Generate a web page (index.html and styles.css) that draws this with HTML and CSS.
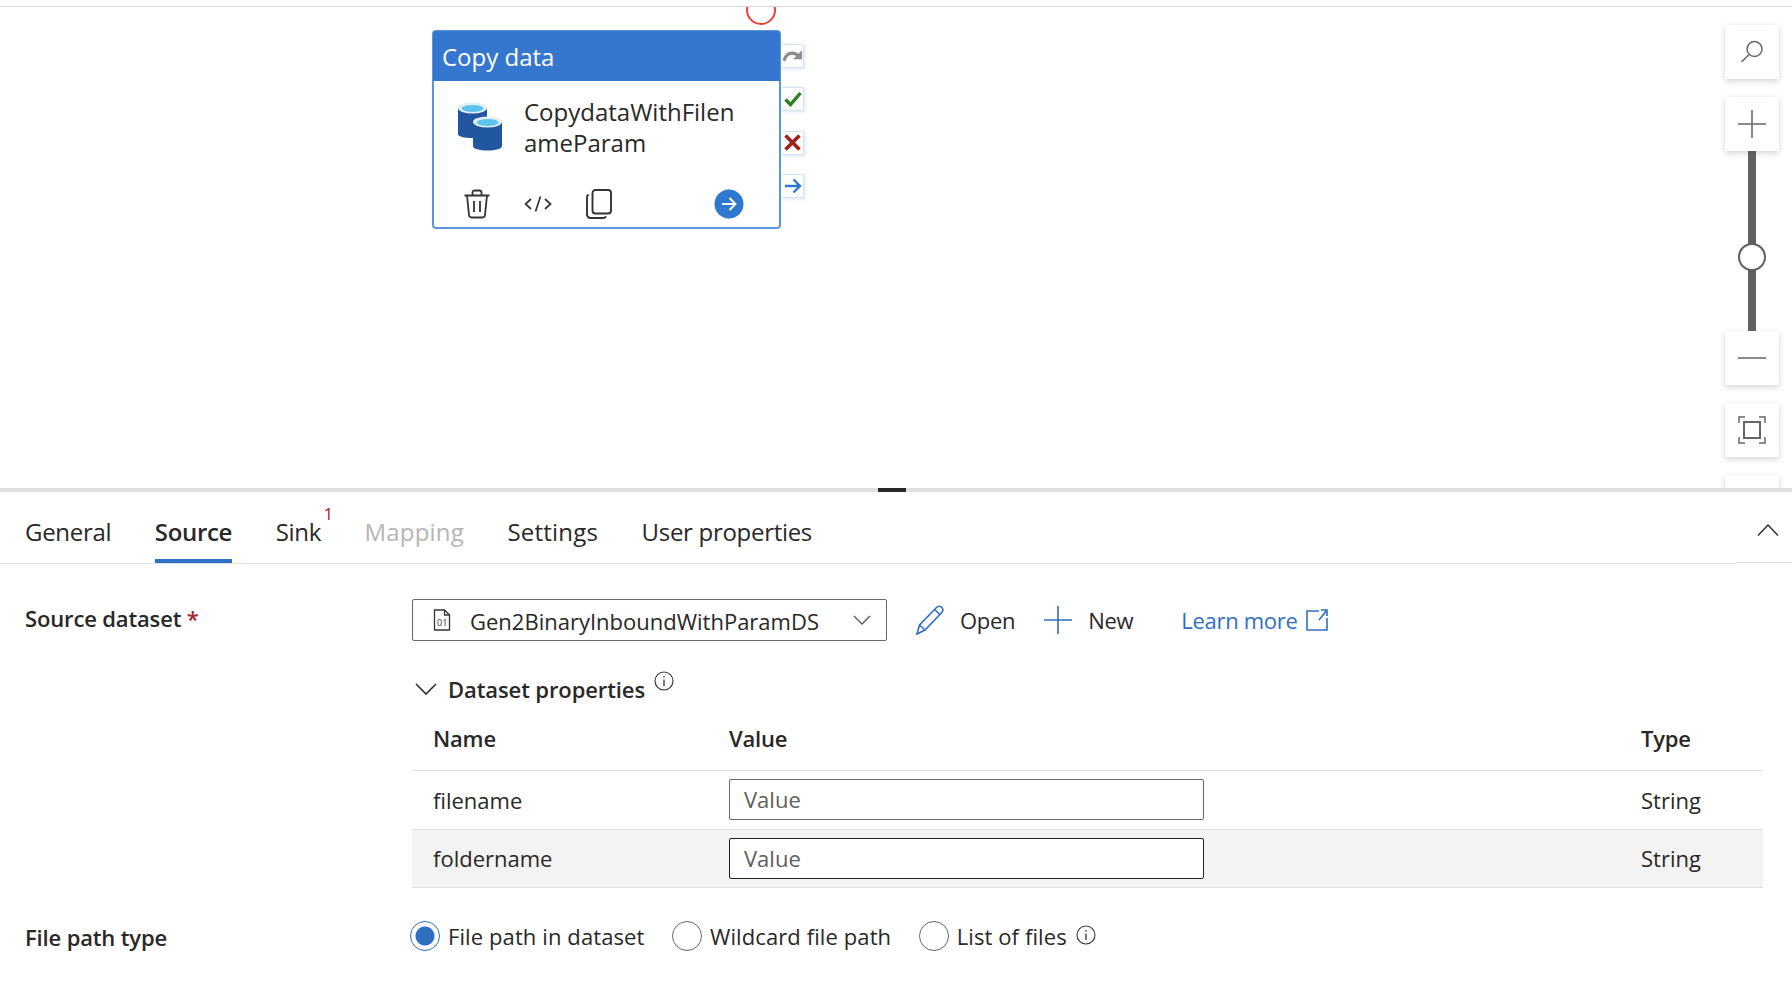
FILE: index.html
```html
<!DOCTYPE html>
<html lang="en">
<head>
  <meta charset="UTF-8" />
  <title>Copy data - Source</title>
  <link rel="stylesheet" href="styles.css">
</head>
<body>
  <div class="canvas">
    <div class="start-ring"></div>

    <div class="node">
      <div class="node-head">Copy data</div>
      <div class="node-body">
        <svg class="db-icon" width="46" height="50" viewBox="0 0 46 50">
          <path d="M1 7v26c0 2.500 6 4 14.500 4s14.500-1.500 14.500-4V7z" fill="#21579e"/>
          <ellipse cx="15.500" cy="7" rx="14.500" ry="5.500" fill="#e4edf3"/>
          <ellipse cx="15.500" cy="7.500" rx="11" ry="3.500" fill="#5cc4ec"/>
          <path d="M16 21v24c0 2.800 6.500 4.500 14.500 4.500S45 47.800 45 45V21z" fill="#21579e"/>
          <ellipse cx="30.500" cy="21" rx="14.500" ry="5.500" fill="#e4edf3"/>
          <ellipse cx="30.500" cy="21.500" rx="11" ry="3.500" fill="#5cc4ec"/>
        </svg>
        <div class="node-name">CopydataWithFilen<br>ameParam</div>
      </div>
      <div class="node-actions">
        <svg class="action-trash" width="28" height="30" viewBox="0 0 28 30" fill="none" stroke="#333" stroke-width="1.800">
          <path d="M1.500 6.500h25M9.500 6.500V3.500c0-1.200.8-2 2-2h5c1.200 0 2 .8 2 2v3"/>
          <path d="M4 6.500l2 19.500c.2 1.500 1 2.500 2.500 2.500h11c1.500 0 2.300-1 2.500-2.500l2-19.500"/>
          <path d="M11 12v11M17 12v11"/>
        </svg>
        <svg class="action-code" width="28" height="18" viewBox="0 0 28 18" fill="none" stroke="#333" stroke-width="1.700">
          <path d="M7 4L1.500 9 7 14M21 4l5.500 5L21 14M16.500 1.500l-5 15"/>
        </svg>
        <svg class="action-copy" width="26" height="30" viewBox="0 0 26 30" fill="none" stroke="#333" stroke-width="1.900">
          <rect x="6.500" y="1" width="18.500" height="23.500" rx="3"/>
          <path d="M2.500 5.500C1.500 6.200 1 7 1 8.500V25c0 2.500 1.500 4 4 4h12c1.500 0 2.500-.6 3-1.700"/>
        </svg>
        <svg class="action-go" width="30" height="30" viewBox="0 0 30 30" fill="none">
          <circle cx="15" cy="15" r="14.500" fill="#2f78d1"/>
          <path d="M8 15h13.500M15.500 9l6 6-6 6" stroke="#fff" stroke-width="1.900"/>
        </svg>
      </div>
    </div>

    <div class="node-links">
      <div class="link-btn">
        <svg width="22" height="16" viewBox="0 0 22 16" fill="none" stroke="#8a8a8a" stroke-width="3.400">
          <path d="M2 13c1.500-5 5-8 8.500-8 3 0 5.500 1.500 8 4"/><path d="M21 2v9.500h-9.500" fill="#8a8a8a" stroke="none"/>
        </svg>
      </div>
      <div class="link-btn">
        <svg width="18" height="16" viewBox="0 0 18 16" fill="none" stroke="#2f7d1e" stroke-width="3.400">
          <path d="M1.500 8.500l5 5L16.500 2"/>
        </svg>
      </div>
      <div class="link-btn">
        <svg width="17" height="17" viewBox="0 0 17 17" fill="none" stroke="#a4201b" stroke-width="3.600">
          <path d="M1.500 1.500l14 14M15.500 1.500l-14 14"/>
        </svg>
      </div>
      <div class="link-btn">
        <svg width="18" height="16" viewBox="0 0 18 16" fill="none" stroke="#2f78d1" stroke-width="2.400">
          <path d="M1 8h15M9.500 1.500L16 8l-6.500 6.500"/>
        </svg>
      </div>
    </div>

    <div class="zoom-tools">
      <div class="tool-btn">
        <svg width="24" height="24" viewBox="0 0 24 24" fill="none" stroke="#666" stroke-width="1.500">
          <circle cx="14.500" cy="9" r="7.500"/><path d="M9 14.500L1.500 22"/>
        </svg>
      </div>
      <div class="tool-btn">
        <svg width="28" height="28" viewBox="0 0 28 28" fill="none" stroke="#666" stroke-width="1.500">
          <path d="M0 14h28M14 0v28"/>
        </svg>
      </div>
      <div class="zoom-track"><span class="zoom-thumb"></span></div>
      <div class="tool-btn">
        <svg width="28" height="4" viewBox="0 0 28 4" fill="none" stroke="#666" stroke-width="1.500">
          <path d="M0 2h28"/>
        </svg>
      </div>
      <div class="tool-btn tool-gap">
        <svg width="28" height="28" viewBox="0 0 28 28" fill="none" stroke="#666" stroke-width="1.500">
          <path d="M1 7V1h6M21 1h6v6M27 21v6h-6M7 27H1v-6"/>
          <rect x="6" y="6" width="16" height="16" stroke-width="2"/>
        </svg>
      </div>
      <div class="tool-btn tool-gap"></div>
    </div>
  </div>

  <div class="splitter"><div class="splitter-grip"></div></div>

  <div class="tabs">
    <div class="tab">General</div>
    <div class="tab tab-active">Source</div>
    <div class="tab">Sink<span class="tab-badge">1</span></div>
    <div class="tab tab-wide tab-disabled">Mapping</div>
    <div class="tab tab-wide">Settings</div>
    <div class="tab">User properties</div>
    <div class="collapse">
      <svg width="22" height="12" viewBox="0 0 22 12" fill="none" stroke="#333" stroke-width="1.500">
        <path d="M1 11.500L11 1l10 10.500"/>
      </svg>
    </div>
  </div>

  <div class="form">
    <div class="form-label source-label">Source dataset <span class="required">*</span></div>
    <div class="source-row">
      <div class="select">
        <svg class="file-icon" width="18" height="22" viewBox="0 0 18 22" fill="none" stroke="#333" stroke-width="1.300">
          <path d="M1.500 1h10l5 5v15h-15z"/><path d="M11.500 1v5h5"/>
          <text x="4" y="16.500" class="file-icon-text">01</text>
        </svg>
        <span class="select-text">Gen2BinaryInboundWithParamDS</span>
        <svg class="select-arrow" width="18" height="10" viewBox="0 0 18 10" fill="none" stroke="#555" stroke-width="1.300">
          <path d="M1 1l8 8 8-8"/>
        </svg>
      </div>
      <div class="cmd cmd-open">
        <svg width="30" height="30" viewBox="0 0 30 30" fill="none" stroke="#2f6fc4" stroke-width="1.600">
          <path d="M1 29l2.500-9L20.500 2.500c1.500-1.500 3.500-1.500 5-.3 1.700 1.400 1.900 3.500.5 5L9 25z"/>
          <path d="M3.500 20L9 25M18.500 4.500l6 5.500"/>
        </svg>
        Open
      </div>
      <div class="cmd cmd-new">
        <svg width="28" height="28" viewBox="0 0 28 28" fill="none" stroke="#2f6fc4" stroke-width="1.600">
          <path d="M0 14h28M14 0v28"/>
        </svg>
        New
      </div>
      <div class="learn-more">
        Learn more
        <svg width="22" height="22" viewBox="0 0 22 22" fill="none" stroke="#2f6fc4" stroke-width="1.600">
          <path d="M13 2H1v19h20V9M21 1l-8 10M15 1h6v6" />
        </svg>
      </div>
    </div>

    <div class="section-head">
      <svg width="22" height="12" viewBox="0 0 22 12" fill="none" stroke="#333" stroke-width="1.700">
        <path d="M1 1l10 10L21 1"/>
      </svg>
      <span class="section-title">Dataset properties</span>
      <svg class="info-icon" width="20" height="20" viewBox="0 0 20 20">
        <circle cx="10" cy="10" r="9" fill="none" stroke="#333" stroke-width="1.100"/>
        <path d="M10 8.500v6.500M10 5v1.600" stroke="#333" stroke-width="1.300"/>
      </svg>
    </div>

    <div class="props">
      <div class="props-row props-head">
        <div>Name</div>
        <div>Value</div>
        <div>Type</div>
      </div>
      <div class="props-row">
        <div>filename</div>
        <div><div class="value-input">Value</div></div>
        <div>String</div>
      </div>
      <div class="props-row props-alt">
        <div>foldername</div>
        <div><div class="value-input value-dark">Value</div></div>
        <div>String</div>
      </div>
    </div>

    <div class="path-row">
      <div class="form-label">File path type</div>
      <div class="radios">
        <span class="radio radio-on"></span><span class="radio-label">File path in dataset</span>
        <span class="radio"></span><span class="radio-label">Wildcard file path</span>
        <span class="radio"></span><span class="radio-label">List of files</span>
        <svg class="info-icon" width="20" height="20" viewBox="0 0 20 20">
          <circle cx="10" cy="10" r="9" fill="none" stroke="#333" stroke-width="1.100"/>
          <path d="M10 8.500v6.500M10 5v1.600" stroke="#333" stroke-width="1.300"/>
        </svg>
      </div>
    </div>
  </div>
</body>
</html>
```

FILE: styles.css
```css
body {
  margin: 0;
  height: 988px;
  overflow: hidden;
  background: #fff;
  color: #292827;
  font-family: "Open Sans", "Noto Sans", sans-serif;
  font-size: 22px;
}

.canvas {
  position: relative;
  height: 481px;
  margin-top: 6px;
  border-top: 1px solid #d8d8d8;
  overflow: hidden;
}

.start-ring {
  position: absolute;
  left: 746px;
  top: -12px;
  width: 26px;
  height: 26px;
  border: 2px solid #e8423a;
  border-radius: 50%;
}

.node {
  position: absolute;
  left: 432px;
  top: 23px;
  width: 345px;
  height: 195px;
  border: 2px solid #5a96dc;
  border-radius: 4px;
  background: #fff;
}

.node-head {
  height: 50px;
  margin: -1px -1px 0;
  padding-left: 9px;
  border-radius: 3px 3px 0 0;
  background: #3576ce;
  color: #fff;
  font-size: 24px;
  line-height: 52px;
}

.node-body {
  display: flex;
  gap: 21px;
  padding: 20px 0 0 23px;
}

.node-name {
  margin-top: -4px;
  font-size: 24px;
  line-height: 30.500px;
}

.node-actions {
  position: relative;
  display: flex;
  align-items: center;
  height: 30px;
  margin-top: 31px;
  padding-left: 29px;
}

.action-code {
  margin-left: 33px;
}

.action-copy {
  margin-left: 34px;
}

.action-go {
  margin-left: auto;
  margin-right: 35px;
}

.node-links {
  position: absolute;
  left: 782px;
  top: 37px;
  display: flex;
  flex-direction: column;
  gap: 19.300px;
}

.link-btn {
  display: flex;
  align-items: center;
  justify-content: center;
  width: 21px;
  height: 22px;
  border: 1px solid #d5e3f5;
  border-left: none;
  box-shadow: 1px 1px 3px rgba(90, 150, 220, 0.25);
  background: #fff;
}

.zoom-tools {
  position: absolute;
  left: 1725px;
  top: 18px;
  display: flex;
  flex-direction: column;
  align-items: center;
  width: 54px;
}

.tool-btn {
  display: flex;
  align-items: center;
  justify-content: center;
  flex: none;
  width: 54px;
  height: 54px;
  background: #fff;
  box-shadow: 0 2px 6px rgba(0, 0, 0, 0.18);
}

.tool-btn:first-child {
  margin-bottom: 18px;
}

.tool-gap {
  margin-top: 18px;
}

.zoom-track {
  position: relative;
  flex: none;
  width: 8px;
  height: 180px;
  background: #5f5f5f;
}

.zoom-thumb {
  position: absolute;
  left: -10.500px;
  top: 92px;
  width: 24px;
  height: 24px;
  border: 2.500px solid #5f5f5f;
  border-radius: 50%;
  background: #fff;
}

.splitter {
  height: 4px;
  background: #e0e0e0;
}

.splitter-grip {
  width: 28px;
  height: 4px;
  margin-left: 878px;
  background: #292827;
}

.tabs {
  display: flex;
  gap: 43.500px;
  height: 71px;
  padding-left: 25px;
  border-bottom: 1px solid #e1e1e1;
}

.tab {
  position: relative;
  height: 71px;
  box-sizing: border-box;
  font-size: 24px;
  line-height: 80px;
  letter-spacing: -0.3px;
}

.tab-wide {
  letter-spacing: 0.2px;
}

.tab-active {
  border-bottom: 4px solid #2f6fc4;
  font-weight: 600;
}

.tab-disabled {
  color: #b5b5b5;
}

.tab-badge {
  position: absolute;
  right: -12px;
  top: 10px;
  color: #a4262c;
  font-size: 17px;
  line-height: 24px;
}

.collapse {
  display: flex;
  align-items: center;
  justify-content: center;
  width: 56px;
  height: 70px;
  margin-left: auto;
  border-bottom: 1px solid #e1e1e1;
  box-shadow: 0 1px 0 #fff;
}

.collapse svg {
  margin: 5px 0 0 7px;
}

.form {
  padding: 35px 29px 0 25px;
}

.form-label {
  font-weight: 600;
  letter-spacing: -0.15px;
}

.source-label {
  float: left;
  margin-top: 4px;
}

.required {
  color: #a4262c;
}

.source-row {
  display: flex;
  align-items: center;
  margin-left: 387px;
  height: 42px;
}

.select {
  display: flex;
  align-items: center;
  box-sizing: border-box;
  width: 475px;
  height: 42px;
  border: 1px solid #666;
  border-radius: 2px;
  padding: 0 15px 0 20px;
}

.file-icon-text {
  font-size: 9px;
  stroke: none;
  fill: #333;
}

.select-text {
  margin: 1px 0 0 19px;
}

.select-arrow {
  margin-left: auto;
}

.cmd {
  display: flex;
  align-items: center;
  gap: 14px;
  letter-spacing: -0.3px;
}

.cmd-open {
  margin-left: 29px;
}

.cmd-new {
  margin-left: 29px;
  gap: 16px;
}

.learn-more {
  display: flex;
  align-items: center;
  gap: 8px;
  margin-left: 48px;
  color: #2f6fc4;
  letter-spacing: -0.3px;
}

.section-head {
  display: flex;
  align-items: center;
  height: 40px;
  margin: 28px 0 0 390px;
  font-weight: 600;
  letter-spacing: -0.1px;
}

.section-title {
  margin-left: 11px;
}

.info-icon {
  margin: -16px 0 0 9px;
}

.props {
  margin: 2px 0 0 387px;
}

.props-row {
  display: grid;
  grid-template-columns: 296px 912px 1fr;
  align-items: center;
  box-sizing: border-box;
  height: 58.500px;
  padding-left: 21px;
  border-bottom: 1px solid #e1e1e1;
}

.props-head {
  height: 60px;
  padding-bottom: 5px;
  font-weight: 600;
  letter-spacing: -0.2px;
}

.props-alt {
  background: #f3f3f3;
}

.value-input {
  box-sizing: border-box;
  width: 475px;
  height: 41px;
  border: 1px solid #666;
  border-radius: 2px;
  padding-left: 14px;
  background: #fff;
  color: #605e5c;
  line-height: 38px;
}

.value-dark {
  border-color: #222;
}

.path-row {
  display: flex;
  align-items: center;
  margin-top: 32px;
}

.path-row .form-label {
  width: 385px;
  margin-top: 2px;
}

.radios {
  display: flex;
  align-items: center;
  letter-spacing: 0.1px;
}

.radio {
  flex: none;
  box-sizing: border-box;
  width: 30px;
  height: 30px;
  border: 1px solid #666;
  border-radius: 50%;
  background: #fff;
}

.radio-on {
  border: 1.500px solid #2f6fc4;
  background: radial-gradient(circle, #2f6fc4 0 9px, #fff 10px);
}

.radio-label {
  margin: 0 27.500px 0 8px;
}

.radio-label:last-of-type {
  margin-right: 0;
}

.radios .info-icon {
  margin: -3px 0 0 9px;
}
```
